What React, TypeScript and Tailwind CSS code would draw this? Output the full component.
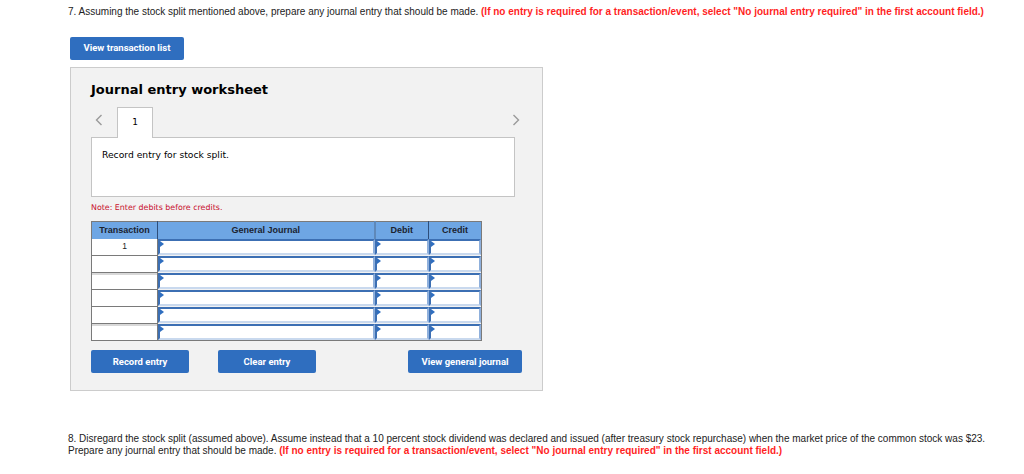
import React from 'react';

const rows = ['1', '', '', '', '', ''];

const Marker = () => (
  <span className="absolute left-0 top-0 w-0 h-0 border-t-[3px] border-b-[3px] border-l-[4px] border-t-transparent border-b-transparent border-l-[#2f6ebf]" />
);

const InputCell = () => (
  <td className="p-0">
    <div className="relative h-[16px] bg-white border-2 border-[#3c6fb3] border-r-[#8fb0dc] border-b-[#c9d9ee]">
      <Marker />
    </div>
  </td>
);

const Chevron = ({ dir }: { dir: 'left' | 'right' }) => (
  <svg width="8" height="12" viewBox="0 0 8 12" fill="none" stroke="#9a9a9a" strokeWidth="1.4">
    {dir === 'left' ? <path d="M6.5 1 L1.5 6 L6.5 11" /> : <path d="M1.5 1 L6.5 6 L1.5 11" />}
  </svg>
);

const BlueButton = ({ label, w }: { label: string; w: string }) => (
  <button className={`${w} h-[23px] bg-[#2f6ebf] rounded-[2px] text-white font-bold text-[9.5px] font-['Roboto',sans-serif]`}>
    {label}
  </button>
);

export default function App() {
  return (
    <div className="w-[1024px] h-[474px] bg-white font-['Liberation_Sans',Arial,sans-serif] text-[#222] relative overflow-hidden">
      <div className="pl-[68px] pt-[6px]">
        <p className="text-[10px] leading-[12px] whitespace-nowrap">
          7. Assuming the stock split mentioned above, prepare any journal entry that should be made.{' '}
          <span className="text-[#ff1f1f] font-bold">
            (If no entry is required for a transaction/event, select "No journal entry required" in the first account field.)
          </span>
        </p>

        <div className="pl-[2px] pt-[16px]">
          <BlueButton label="View transaction list" w="w-[114px]" />
        </div>

        <div className="ml-[2px] mt-[7px] w-[473px] h-[324px] bg-[#f2f2f2] border border-[#cccccc] pl-[20px] pt-[14px]">
          <h2 className="font-['DejaVu_Sans',Verdana,sans-serif] font-bold text-[13px] leading-[15px] text-black">
            Journal entry worksheet
          </h2>

          <div className="relative mt-[10px] w-[424px]">
            <div className="flex items-end h-[30px]">
              <div className="w-[26px] h-[30px] flex items-center pl-[4px] pb-[3px]">
                <Chevron dir="left" />
              </div>
              <div className="w-[36px] h-[31px] bg-white border border-[#c4c4c4] border-b-0 relative z-10 -mb-px flex items-center justify-center text-[9px] font-['DejaVu_Sans',Verdana,sans-serif] text-black">
                1
              </div>
              <div className="flex-1" />
              <div className="absolute right-[-5px] top-[7px]">
                <Chevron dir="right" />
              </div>
            </div>
            <div className="h-[60px] bg-white border border-[#c4c4c4] pl-[10px] pt-[10px] text-[9.2px] font-['DejaVu_Sans',Verdana,sans-serif] text-black">
              Record entry for stock split.
            </div>
          </div>

          <p className="mt-[6px] text-[7.9px] leading-[10px] font-['DejaVu_Sans',Verdana,sans-serif] text-[#c8102e]">
            Note: Enter debits before credits.
          </p>

          <table className="mt-[8px] w-[390px] border-collapse border border-[#7a7a7a] table-fixed text-[9px]">
            <thead>
              <tr className="h-[18px] bg-[#6ea6e4] text-[#1b2330] font-bold">
                <th className="w-[66px] border-r border-[#2e4e7a] font-bold">Transaction</th>
                <th className="w-[217px] border-r-2 border-[#5f88b8] font-bold">General Journal</th>
                <th className="w-[54px] border-r border-[#2e4e7a] font-bold">Debit</th>
                <th className="w-[53px] font-bold">Credit</th>
              </tr>
            </thead>
            <tbody>
              {rows.map((r, i) => (
                <tr key={i} className="h-[16px]">
                  <td className="p-0 bg-white border-r border-b border-[#7a7a7a] text-center text-[8.5px] leading-[14px]">
                    <div className={`h-[16px] ${i === 2 || i === 5 ? 'border-t-2 border-[#d8d8d8]' : ''}`}>{r}</div>
                  </td>
                  <InputCell />
                  <InputCell />
                  <InputCell />
                </tr>
              ))}
            </tbody>
          </table>

          <div className="flex mt-[9px]">
            <BlueButton label="Record entry" w="w-[98px]" />
            <div className="w-[29px]" />
            <BlueButton label="Clear entry" w="w-[98px]" />
            <div className="w-[92px]" />
            <BlueButton label="View general journal" w="w-[114px]" />
          </div>
        </div>

        <div className="pt-[42px] text-[10px] leading-[12px] whitespace-nowrap">
          <p>
            8. Disregard the stock split (assumed above). Assume instead that a 10 percent stock dividend was declared and issued (after treasury stock repurchase) when the market price of the common stock was $23.
          </p>
          <p>
            Prepare any journal entry that should be made.{' '}
            <span className="text-[#ff1f1f] font-bold">
              (If no entry is required for a transaction/event, select "No journal entry required" in the first account field.)
            </span>
          </p>
        </div>
      </div>
    </div>
  );
}
